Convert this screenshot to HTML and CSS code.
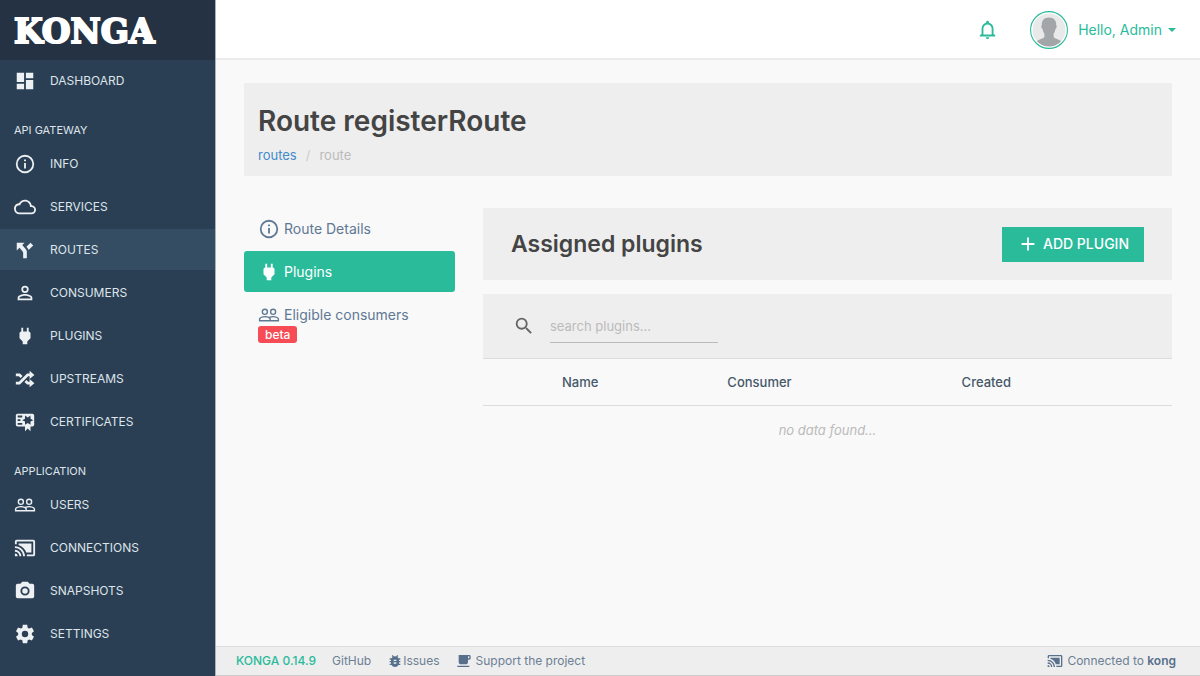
FILE: index.html
```html
<!DOCTYPE html>
<html lang="en">
<head>
    <meta charset="UTF-8">
    <meta name="viewport" content="width=device-width, initial-scale=1.0">
    <title>Konga - Route registerRoute</title>
    <link rel="stylesheet" href="styles.css">
</head>
<body>
    <svg class="sprite" aria-hidden="true">
        <symbol id="dashboard" viewBox="0 0 24 24"><path d="M13,3V9H21V3M13,21H21V11H13M3,21H11V15H3M3,13H11V3H3V13Z"/></symbol>
        <symbol id="info" viewBox="0 0 24 24"><path d="M11,9H13V7H11M12,20C7.59,20 4,16.41 4,12C4,7.59 7.59,4 12,4C16.41,4 20,7.59 20,12C20,16.41 16.41,20 12,20M12,2A10,10 0 0,0 2,12A10,10 0 0,0 12,22A10,10 0 0,0 22,12A10,10 0 0,0 12,2M11,17H13V11H11V17Z"/></symbol>
        <symbol id="cloud" viewBox="0 0 24 24"><path d="M19,18H6A4,4 0 0,1 2,14A4,4 0 0,1 6,10H6.71C7.37,7.69 9.5,6 12,6A5.5,5.5 0 0,1 17.5,11.5V12H19A3,3 0 0,1 22,15A3,3 0 0,1 19,18M19.35,10.03C18.67,6.59 15.64,4 12,4C9.11,4 6.6,5.64 5.35,8.03C2.34,8.36 0,10.9 0,14A6,6 0 0,0 6,20H19A5,5 0 0,0 24,15C24,12.36 21.95,10.22 19.35,10.03Z"/></symbol>
        <symbol id="fork" viewBox="0 0 24 24"><path d="M3,4V12.5L6,9.5L9,13C10,14 10,15 10,15V21H14V14C14,14 14,13 13.47,12C12.94,11 12,10 12,10L9,6.58L11.5,4M18,4L13.54,8.47L14,9C14,9 14.93,10 15.47,11C15.68,11.4 15.8,11.79 15.87,12.13L21,7"/></symbol>
        <symbol id="account" viewBox="0 0 24 24"><path d="M12,13C9.33,13 4,14.33 4,17V20H20V17C20,14.33 14.67,13 12,13M12,4A4,4 0 0,0 8,8A4,4 0 0,0 12,12A4,4 0 0,0 16,8A4,4 0 0,0 12,4M12,14.9C14.97,14.9 18.1,16.36 18.1,17V18.1H5.9V17C5.9,16.36 9,14.9 12,14.9M12,5.9A2.1,2.1 0 0,1 14.1,8A2.1,2.1 0 0,1 12,10.1A2.1,2.1 0 0,1 9.9,8A2.1,2.1 0 0,1 12,5.9Z"/></symbol>
        <symbol id="plug" viewBox="0 0 24 24"><path d="M16,7V3H14V7H10V3H8V7H8C7,7 6,8 6,9V14.5L9.5,18V21H14.5V18L18,14.5V9C18,8 17,7 16,7Z"/></symbol>
        <symbol id="shuffle" viewBox="0 0 24 24"><path d="M17,3L22.25,7.5L17,12L22.25,16.5L17,21V18H14.26L11.44,15.18L13.56,13.06L15.5,15H17V12L17,9H15.5L6.5,18H2V15H5.26L14.26,6H17V3M2,6H6.5L9.32,8.82L7.2,10.94L5.26,9H2V6Z"/></symbol>
        <symbol id="certificate" viewBox="0 0 24 24"><path d="M4,3C2.89,3 2,3.89 2,5V15A2,2 0 0,0 4,17H12V22L15,19L18,22V17H20A2,2 0 0,0 22,15V8L22,6V5A2,2 0 0,0 20,3H16V3H4M12,5L15,7L18,5V8.5L21,10L18,11.5V15L15,13L12,15V11.5L9,10L12,8.5V5M4,5H9V7H4V5M4,9H7V11H4V9M4,13H9V15H4V13Z"/></symbol>
        <symbol id="users" viewBox="0 0 24 24"><path d="M16.5,6.5A2,2 0 0,1 18.5,8.5A2,2 0 0,1 16.5,10.5A2,2 0 0,1 14.5,8.5A2,2 0 0,1 16.5,6.5M16.5,12A3.5,3.5 0 0,0 20,8.5A3.5,3.5 0 0,0 16.5,5A3.5,3.5 0 0,0 13,8.5A3.5,3.5 0 0,0 16.5,12M7.5,6.5A2,2 0 0,1 9.5,8.5A2,2 0 0,1 7.5,10.5A2,2 0 0,1 5.5,8.5A2,2 0 0,1 7.5,6.5M7.5,12A3.5,3.5 0 0,0 11,8.5A3.5,3.5 0 0,0 7.5,5A3.5,3.5 0 0,0 4,8.5A3.5,3.5 0 0,0 7.5,12M21.5,17.5H14V16.25C14,15.79 13.8,15.39 13.5,15.03C14.36,14.73 15.44,14.5 16.5,14.5C18.94,14.5 21.5,15.71 21.5,16.25M12.5,17.5H2.5V16.25C2.5,15.71 5.06,14.5 7.5,14.5C9.94,14.5 12.5,15.71 12.5,16.25M16.5,13C15.3,13 13.43,13.34 12,14C10.57,13.33 8.7,13 7.5,13C5.33,13 1,14.08 1,16.25V19H23V16.25C23,14.08 18.67,13 16.5,13Z"/></symbol>
        <symbol id="cast" viewBox="0 0 24 24"><path d="M21,3H3C1.89,3 1,3.89 1,5V8H3V5H21V19H14V21H21A2,2 0 0,0 23,19V5C23,3.89 22.1,3 21,3M1,10V12A9,9 0 0,1 10,21H12C12,14.92 7.07,10 1,10M19,7H5V8.63C8.96,9.91 12.09,13.04 13.37,17H19M1,14V16A5,5 0 0,1 6,21H8A7,7 0 0,0 1,14M1,18V21H4A3,3 0 0,0 1,18Z"/></symbol>
        <symbol id="camera" viewBox="0 0 24 24"><path d="M4,4H7L9,2H15L17,4H20A2,2 0 0,1 22,6V18A2,2 0 0,1 20,20H4A2,2 0 0,1 2,18V6A2,2 0 0,1 4,4M12,7A5,5 0 0,0 7,12A5,5 0 0,0 12,17A5,5 0 0,0 17,12A5,5 0 0,0 12,7M12,9A3,3 0 0,1 15,12A3,3 0 0,1 12,15A3,3 0 0,1 9,12A3,3 0 0,1 12,9Z"/></symbol>
        <symbol id="settings" viewBox="0 0 24 24"><path d="M12,15.5A3.5,3.5 0 0,1 8.5,12A3.5,3.5 0 0,1 12,8.5A3.5,3.5 0 0,1 15.5,12A3.5,3.5 0 0,1 12,15.5M19.43,12.97C19.47,12.65 19.5,12.33 19.5,12C19.5,11.67 19.47,11.34 19.43,11L21.54,9.37C21.73,9.22 21.78,8.95 21.66,8.73L19.66,5.27C19.54,5.05 19.27,4.96 19.05,5.05L16.56,6.05C16.04,5.66 15.5,5.32 14.87,5.07L14.5,2.42C14.46,2.18 14.25,2 14,2H10C9.75,2 9.54,2.18 9.5,2.42L9.13,5.07C8.5,5.32 7.96,5.66 7.44,6.05L4.95,5.05C4.73,4.96 4.46,5.05 4.34,5.27L2.34,8.73C2.21,8.95 2.27,9.22 2.46,9.37L4.57,11C4.53,11.34 4.5,11.67 4.5,12C4.5,12.33 4.53,12.65 4.57,12.97L2.46,14.63C2.27,14.78 2.21,15.05 2.34,15.27L4.34,18.73C4.46,18.95 4.73,19.03 4.95,18.95L7.44,17.94C7.96,18.34 8.5,18.68 9.13,18.93L9.5,21.58C9.54,21.82 9.75,22 10,22H14C14.25,22 14.46,21.82 14.5,21.58L14.87,18.93C15.5,18.67 16.04,18.34 16.56,17.94L19.05,18.95C19.27,19.03 19.54,18.95 19.66,18.73L21.66,15.27C21.78,15.05 21.73,14.78 21.54,14.63L19.43,12.97Z"/></symbol>
        <symbol id="bell" viewBox="0 0 24 24"><path d="M16,17H7V10.5C7,8 9,6 11.5,6C14,6 16,8 16,10.5M18,16V10.5C18,7.43 15.86,4.86 13,4.18V3.5A1.5,1.5 0 0,0 11.5,2A1.5,1.5 0 0,0 10,3.5V4.18C7.13,4.86 5,7.43 5,10.5V16L3,18V19H20V18M11.5,22A2,2 0 0,0 13.5,20H9.5A2,2 0 0,0 11.5,22Z"/></symbol>
        <symbol id="magnify" viewBox="0 0 24 24"><path d="M9.5,3A6.5,6.5 0 0,1 16,9.5C16,11.11 15.41,12.59 14.44,13.73L14.71,14H15.5L20.5,19L19,20.5L14,15.5V14.71L13.73,14.44C12.59,15.41 11.11,16 9.5,16A6.5,6.5 0 0,1 3,9.5A6.5,6.5 0 0,1 9.5,3M9.5,5C7,5 5,7 5,9.5C5,12 7,14 9.5,14C12,14 14,12 14,9.5C14,7 12,5 9.5,5Z"/></symbol>
        <symbol id="plus" viewBox="0 0 24 24"><path d="M19,13H13V19H11V13H5V11H11V5H13V11H19V13Z"/></symbol>
        <symbol id="bug" viewBox="0 0 24 24"><path d="M14,12H10V10H14M14,16H10V14H14M20,8H17.19C16.74,7.22 16.12,6.55 15.37,6.04L17,4.41L15.59,3L13.42,5.17C12.96,5.06 12.5,5 12,5C11.5,5 11.04,5.06 10.59,5.17L8.41,3L7,4.41L8.62,6.04C7.88,6.55 7.26,7.22 6.81,8H4V10H6.09C6.04,10.33 6,10.66 6,11V12H4V14H6V15C6,15.34 6.04,15.67 6.09,16H4V18H6.81C7.85,19.79 9.78,21 12,21C14.22,21 16.15,19.79 17.19,18H20V16H17.91C17.96,15.67 18,15.34 18,15V14H20V12H18V11C18,10.66 17.96,10.33 17.91,10H20V8Z"/></symbol>
        <symbol id="coffee" viewBox="0 0 24 24"><path d="M2,21H20V19H2M20,8H18V5H20M20,3H4V13A4,4 0 0,0 8,17H14A4,4 0 0,0 18,13V10H20A2,2 0 0,0 22,8V5C22,3.89 21.1,3 20,3Z"/></symbol>
    </svg>

    <aside class="sidebar">
        <a class="logo" href="#">KONGA</a>
        <nav>
            <a class="nav-item" href="#"><svg class="icon"><use href="#dashboard"/></svg>DASHBOARD</a>
            <div class="nav-title">API GATEWAY</div>
            <a class="nav-item" href="#"><svg class="icon"><use href="#info"/></svg>INFO</a>
            <a class="nav-item" href="#"><svg class="icon"><use href="#cloud"/></svg>SERVICES</a>
            <a class="nav-item active" href="#"><svg class="icon"><use href="#fork"/></svg>ROUTES</a>
            <a class="nav-item" href="#"><svg class="icon"><use href="#account"/></svg>CONSUMERS</a>
            <a class="nav-item" href="#"><svg class="icon"><use href="#plug"/></svg>PLUGINS</a>
            <a class="nav-item" href="#"><svg class="icon"><use href="#shuffle"/></svg>UPSTREAMS</a>
            <a class="nav-item" href="#"><svg class="icon"><use href="#certificate"/></svg>CERTIFICATES</a>
            <div class="nav-title">APPLICATION</div>
            <a class="nav-item" href="#"><svg class="icon"><use href="#users"/></svg>USERS</a>
            <a class="nav-item" href="#"><svg class="icon"><use href="#cast"/></svg>CONNECTIONS</a>
            <a class="nav-item" href="#"><svg class="icon"><use href="#camera"/></svg>SNAPSHOTS</a>
            <a class="nav-item" href="#"><svg class="icon"><use href="#settings"/></svg>SETTINGS</a>
        </nav>
    </aside>

    <div class="wrapper">
        <header class="topbar">
            <button class="bell" type="button" aria-label="Notifications"><svg class="icon"><use href="#bell"/></svg></button>
            <button class="user" type="button">
                <svg class="avatar" viewBox="0 0 38 38">
                    <circle cx="19" cy="19" r="18.4" fill="#fff" stroke="#2abb9b" stroke-width="1.1"/>
                    <circle cx="19" cy="19" r="16.5" fill="#e9e9ea"/>
                    <path fill="#a3a6a8" d="M19 6.500c4.700 0 7.200 2.800 7.200 7 0 1 .6 1.300.5 2.300-.1 1.300-.9 2-1.300 2.500-.4 2.200-1.100 3.500-1.800 4.500v3.300c1 1.800 5.400 2.200 7.500 4.200a16.500 16.500 0 0 1-24.200 0c2.100-2 6.500-2.400 7.500-4.200v-3.300c-.7-1-1.400-2.300-1.800-4.500-.4-.5-1.200-1.200-1.300-2.500-.1-1 .5-1.300.5-2.300 0-4.200 2.500-7 7.200-7z"/>
                </svg>
                Hello, Admin
                <span class="caret"></span>
            </button>
        </header>

        <main class="content">
            <section class="page-header">
                <h1>Route registerRoute</h1>
                <nav class="breadcrumb">
                    <a href="#">routes</a>
                    <span class="slash">/</span>
                    <span>route</span>
                </nav>
            </section>

            <div class="columns">
                <nav class="tabs">
                    <a class="tab" href="#"><svg class="icon"><use href="#info"/></svg>Route Details</a>
                    <a class="tab active" href="#"><svg class="icon"><use href="#plug"/></svg>Plugins</a>
                    <a class="tab" href="#"><svg class="icon"><use href="#users"/></svg>Eligible consumers <span class="label">beta</span></a>
                </nav>

                <section class="panel">
                    <div class="panel-header">
                        <h2>Assigned plugins</h2>
                        <button class="btn" type="button"><svg class="icon"><use href="#plus"/></svg>ADD PLUGIN</button>
                    </div>
                    <div class="search">
                        <label for="search" aria-label="Search plugins"><svg class="icon"><use href="#magnify"/></svg></label>
                        <input id="search" type="text" placeholder="search plugins...">
                    </div>
                    <table>
                        <thead>
                            <tr>
                                <th class="col-icon"></th>
                                <th class="col-name">Name</th>
                                <th class="col-consumer">Consumer</th>
                                <th>Created</th>
                            </tr>
                        </thead>
                        <tbody>
                            <tr>
                                <td class="empty" colspan="4">no data found...</td>
                            </tr>
                        </tbody>
                    </table>
                </section>
            </div>
        </main>

        <footer class="footer">
            <a class="version" href="#">KONGA 0.14.9</a>
            <a href="#">GitHub</a>
            <a href="#"><svg class="icon"><use href="#bug"/></svg>Issues</a>
            <a class="support" href="#"><svg class="icon"><use href="#coffee"/></svg>Support the project</a>
            <a class="connection" href="#"><svg class="icon"><use href="#cast"/></svg><span>Connected to <b>kong</b></span></a>
        </footer>
    </div>
</body>
</html>
```
FILE: styles.css
```css
* {
    box-sizing: border-box;
}
body {
    margin: 0;
    min-height: 100vh;
    display: flex;
    font-family: Inter, "Open Sans", sans-serif;
    font-size: 13px;
    line-height: 20px;
    color: #444;
    background-color: #f9f9f9;
}
a {
    color: inherit;
    text-decoration: none;
}
button {
    font: inherit;
    border: 0;
    padding: 0;
    background: none;
    cursor: pointer;
}
h1, h2 {
    margin: 0;
    font-weight: 600;
}
.sprite {
    display: none;
}
.icon {
    width: 22px;
    height: 22px;
    flex: none;
    fill: currentColor;
}

/* sidebar */
.sidebar {
    width: 216px;
    flex: none;
    background-color: #2b3f54;
    border-right: 1px solid #a9b2bb;
}
.logo {
    display: flex;
    align-items: center;
    height: 60px;
    padding: 3px 0 0 14px;
    background-color: #253243;
    color: #fff;
    font-family: "DejaVu Serif", serif;
    font-size: 33px;
    font-weight: bold;
    -webkit-text-stroke: 2px #fff;
}
.nav-item {
    display: flex;
    align-items: center;
    gap: 14px;
    height: 41px;
    margin-bottom: 2px;
    padding-left: 14px;
    color: #dde4ea;
    font-size: 12px;
}
.nav-item .icon {
    fill: #eef1f3;
}
.nav-item.active {
    background-color: #344d63;
}
.nav-title {
    padding: 17px 14px 3px;
    color: #dde4ea;
    font-size: 11px;
}

/* top bar */
.wrapper {
    flex: 1;
    min-width: 0;
    display: flex;
    flex-direction: column;
}
.topbar {
    display: flex;
    justify-content: flex-end;
    align-items: center;
    gap: 31px;
    height: 60px;
    padding: 2px 24px 0 0;
    background-color: #fff;
    border-bottom: 2px solid #ebebeb;
}
.bell, .user {
    display: flex;
    align-items: center;
    color: #2abb9b;
}
.user {
    gap: 10px;
    font-size: 14px;
}
.avatar {
    width: 38px;
    height: 38px;
}
.caret {
    margin-left: -4px;
    border-top: 4px solid #2abb9b;
    border-left: 4px solid transparent;
    border-right: 4px solid transparent;
}

/* content */
.content {
    flex: 1;
    padding: 23px 28px;
}
.page-header {
    padding: 20px 14px 11px;
    background-color: #eee;
}
.page-header h1 {
    font-size: 28px;
    line-height: 36px;
}
.breadcrumb {
    display: flex;
    gap: 9px;
    margin-top: 6px;
    color: #bbb;
}
.breadcrumb a {
    color: #428bca;
}
.breadcrumb .slash {
    color: #ccc;
}
.columns {
    display: grid;
    grid-template-columns: repeat(4, 1fr);
    gap: 28px;
    margin-top: 32px;
}
.tab {
    display: flex;
    flex-wrap: wrap;
    align-items: center;
    column-gap: 4px;
    margin-bottom: 2px;
    padding: 10px 14px 9px;
    border-radius: 3px;
    color: #5f7894;
    font-size: 14px;
}
.tab.active {
    background-color: #2abb9b;
    color: #fff;
}
.label {
    padding: 0 7px;
    border-radius: 3px;
    background-color: #f74b55;
    color: #fff;
    font-size: 12px;
    font-weight: 500;
    line-height: 17px;
}
.panel {
    grid-column: span 3;
}
.panel-header {
    display: flex;
    justify-content: space-between;
    align-items: center;
    height: 72px;
    margin-bottom: 14px;
    padding: 0 28px;
    background-color: #eee;
}
.panel-header h2 {
    font-size: 23px;
}
.btn {
    display: flex;
    align-items: center;
    gap: 4px;
    height: 35px;
    padding: 0 15px;
    background-color: #2abb9b;
    color: #fff;
    font-size: 14px;
    font-weight: 500;
}
.search {
    display: flex;
    align-items: center;
    gap: 15px;
    height: 65px;
    padding: 0 30px;
    background-color: #eee;
    border-bottom: 1px solid #ddd;
}
.search label {
    display: flex;
    color: #666;
}
.search input {
    width: 168px;
    height: 34px;
    padding: 0;
    border: 0;
    border-bottom: 1px solid #bbb;
    background: none;
    font: inherit;
}
.search input::placeholder {
    color: #bbb;
}
table {
    width: 100%;
    border-collapse: collapse;
    table-layout: fixed;
}
th {
    padding: 13px 14px;
    border-bottom: 1px solid #ddd;
    text-align: left;
    font-weight: 500;
    color: #46586a;
}
.col-icon {
    width: 65px;
}
.col-name {
    width: 24%;
}
.col-consumer {
    width: 34%;
}
.empty {
    padding: 14px;
    text-align: center;
    font-style: italic;
    color: #bbb;
}

/* footer */
.footer {
    display: flex;
    align-items: center;
    gap: 16px;
    height: 30px;
    padding: 0 24px 0 20px;
    background-color: #eee;
    border-top: 1px solid #ddd;
    border-bottom: 1px solid #ccc;
    color: #6c7f95;
    font-size: 12px;
}
.footer a {
    display: flex;
    align-items: center;
}
.footer .icon {
    width: 16px;
    height: 16px;
    fill: #58708c;
}
.footer .version {
    color: #2abb9b;
    font-weight: 500;
}
.footer .support, .footer .connection {
    gap: 4px;
}
.footer .connection {
    margin-left: auto;
}
.footer b {
    font-weight: 600;
    color: #58708c;
}
```
